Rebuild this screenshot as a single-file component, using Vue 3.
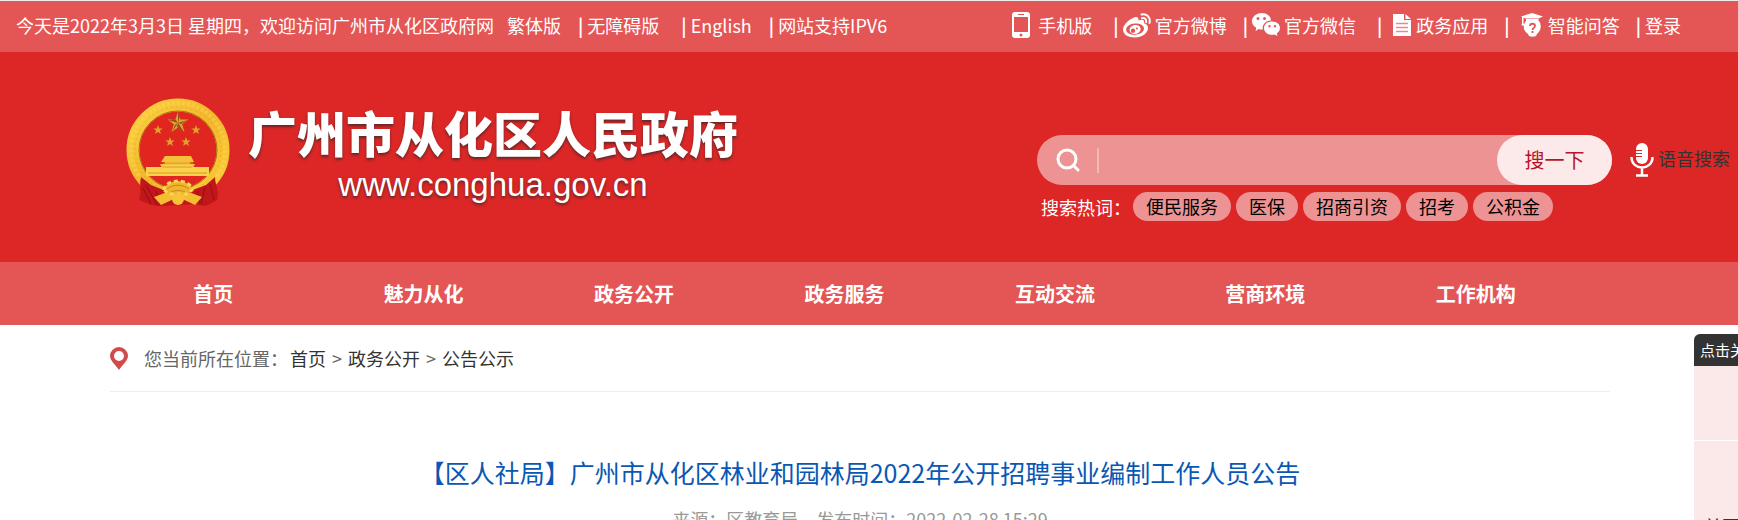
<template>
  <div class="page">
    <div class="topbar">
      <ul class="top-list top-left">
        <li class="today">今天是2022年3月3日 星期四，欢迎访问广州市从化区政府网</li>
        <li><a href="#">繁体版</a></li>
        <li><span class="sep">|</span><a href="#">无障碍版</a></li>
        <li class="wide"><span class="sep">|</span><a href="#">English</a></li>
        <li><span class="sep">|</span><a href="#">网站支持IPV6</a></li>
      </ul>
      <ul class="top-list">
        <li>
          <a href="#" class="phone">
            <svg width="18" height="26" viewBox="0 0 18 26">
              <path fill="#fff" fill-rule="evenodd" d="M3 0h12a3 3 0 0 1 3 3v20a3 3 0 0 1-3 3H3a3 3 0 0 1-3-3V3a3 3 0 0 1 3-3zM2 5v15h14V5zM6 2v1h6V2zM9 21.500a1.500 1.500 0 1 0 0 3 1.500 1.500 0 0 0 0-3z" />
            </svg>
            手机版
          </a>
        </li>
        <li class="wide">
          <span class="sep">|</span>
          <a href="#">
            <svg width="28" height="25" viewBox="0 0 28 25">
              <path fill="#fff" fill-rule="evenodd" d="M10 5c2.500-1.500 6-1.500 5.500 2.500 3-1.300 6.500-1 5.500 2.700 2.500.6 4 2.300 4 4.800 0 5-6 9.500-13 9.500S0 21.500 0 16.500C0 12.500 5 7 10 5zM12 10.500c-5 .2-9 3-8.800 6.500.3 3 4.300 5 9 4.700 5-.3 9-3 8.800-6.500-.3-3-4.300-5-9-4.700z" />
              <path fill="#fff" fill-rule="evenodd" d="M12 12c3.600-.3 6 2 5.600 4.700-.5 2.600-3 4.300-6 4.300s-5.200-2-5-4.500C6.900 14 9 12.200 12 12zM10 15.500a2.200 2.200 0 1 0 0 4.400 2.200 2.200 0 0 0 0-4.400zM14 14.500a1 1 0 1 0 0 2 1 1 0 0 0 0-2z" />
              <path fill="none" stroke="#fff" stroke-width="2" stroke-linecap="round" d="M18.500 1.500c5-1.500 9.500 3 8 8.500M19 5.200c2.700-.8 4.800 1.300 4 4" />
            </svg>
            官方微博
          </a>
        </li>
        <li>
          <span class="sep">|</span>
          <a href="#">
            <svg width="28" height="24" viewBox="0 0 28 24">
              <path fill="#fff" fill-rule="evenodd" d="M9.500 0C15 0 19 3.300 19 7.500c-4.500 0-8.300 3.200-8.300 7.500l.2 1.500c-1.500.2-2.800 0-4.200-.5L3.500 18l.8-3.200C1.700 13.200 0 10.900 0 8.200 0 3.700 4.200 0 9.500 0zM6 4a1.500 1.500 0 1 0 0 3 1.500 1.500 0 0 0 0-3zM12.500 4a1.500 1.500 0 1 0 0 3 1.500 1.500 0 0 0 0-3z" />
              <path fill="#fff" fill-rule="evenodd" d="M20 8.500c4.500 0 8 2.800 8 6.500 0 2.300-1.300 4.100-3.200 5.400l.7 2.700-3-1.600c-6 1.300-10.500-2-10.500-6.500 0-3.700 3.500-6.500 8-6.500zM17.500 12a1.200 1.200 0 1 0 0 2.400 1.200 1.200 0 0 0 0-2.400zM23 12a1.200 1.200 0 1 0 0 2.400 1.200 1.200 0 0 0 0-2.400z" />
            </svg>
            官方微信
          </a>
        </li>
        <li class="wide">
          <span class="sep">|</span>
          <a href="#" class="spaced">
            <svg width="18" height="22" viewBox="0 0 18 22">
              <path fill="#fff" d="M0 0h11v6h7v16H0zM12.500 0 18 5h-5.500z" />
              <path stroke="#e88" stroke-width="1.500" d="M3 9.500h12M3 13.500h12M3 17.500h12" />
            </svg>
            政务应用
          </a>
        </li>
        <li>
          <span class="sep">|</span>
          <a href="#" class="spaced">
            <svg width="22" height="24" viewBox="0 0 22 24">
              <path fill="#fff" d="M11 0 22 3.500 17.500 5.500H4.500L0 3.500zM5 6h12.500v3H5z" />
              <path fill="#fff" d="M1 4h1.500v6l.8 2.500H.5L1 10z" />
              <path fill="#fff" d="M5 8h13c3 4 2 10-2 13l-1 2c-2 1-5 1-7 0l-1-2C2 18 1.500 12 5 8z" />
              <path fill="none" stroke="#e45656" stroke-width="1.800" d="M9 13c0-3 5-3 5 0 0 2-2.500 1.800-2.500 4M11.500 18v2" />
            </svg>
            智能问答
          </a>
        </li>
        <li><span class="sep">|</span><a href="#">登录</a></li>
      </ul>
    </div>

    <header class="header">
      <a href="#" class="logo">
        <svg class="emblem" width="104" height="110" viewBox="0 0 104 110">
          <defs>
            <linearGradient id="gold" x1="0" y1="0" x2="1" y2="1">
              <stop offset="0" stop-color="#fbd23f" />
              <stop offset="0.5" stop-color="#f3b62b" />
              <stop offset="1" stop-color="#fccf38" />
            </linearGradient>
          </defs>
          <circle cx="52" cy="52" r="45" fill="#e12620" stroke="url(#gold)" stroke-width="13" />
          <circle cx="52" cy="52" r="47" fill="none" stroke="#fbdc62" stroke-width="4" stroke-dasharray="3 2" opacity="0.4" />
          <circle cx="52" cy="52" r="43" fill="none" stroke="#d99a25" stroke-width="1" stroke-dasharray="2 3" opacity="0.5" />
          <circle cx="52" cy="52" r="39" fill="none" stroke="#a8701c" stroke-width="1" />
          <!-- 五角星 -->
          <g fill="#dca52d">
            <path v-for="star in stars" :key="star.x" :d="starPath(star)" />
          </g>
          <path fill="#8c541c" d="m52 14 0 11 2-7zM52 25l10-3-7 4zM52 25l6 9-7-5zM52 25l-6 9 3-7zM52 25l-10-3 7-1z" />
          <!-- 天安门 -->
          <path fill="#f5c13a" d="M39 58h26l3 6h-4v2h5l-2 4H36l-2-4h5v-2h-4z" />
          <path fill="#fbd24c" d="M20 69h63v9H20zM37 67h29v11H37z" />
          <path stroke="#d99a25" d="M37 65h30M37 69h29M22 75h59" />
          <!-- 绶带和齿轮 -->
          <path fill="#c1171a" d="m15 79 10 8 15 6h24l16-6 9-8c0 8 5 15 2 23-4 2-8 6-14 6l-8-2-34 2c-7 1-14-3-22-6 3-8 0-15 2-23z" />
          <path stroke="#8e1115" stroke-width="1" fill="none" d="m17 90 8 16m-5-19 11 20m48-18-4 17m9-20 4 16M30 93l4 14m37-14 3 13" />
          <path fill="#f5bd30" d="m28 99 24-9 24 9-7 8-17-8-17 8z" />
          <path fill="#efb52b" stroke="#fbd65c" stroke-width="3" stroke-dasharray="4 3" d="M38 92a14 9 0 0 1 28 0l-5 4H43z" />
          <circle cx="52" cy="101" r="6" fill="#f7c339" />
          <path stroke="#c9861f" fill="none" d="M41 91c7-5 15-5 22 0M45 94c4-2 10-2 14 0" />
        </svg>
        <span class="logo-text">
          <strong class="site-name">广州市从化区人民政府</strong>
          <span class="site-url">www.conghua.gov.cn</span>
        </span>
      </a>

      <div class="search">
        <div class="search-row">
          <form class="search-form" @submit.prevent>
            <label for="keyword" class="search-label" aria-label="搜索">
              <svg width="24" height="24" viewBox="0 0 24 24" fill="none" stroke="#fff" stroke-width="3" stroke-linecap="round">
                <circle cx="11" cy="11" r="9" />
                <path d="m18 18 4 4" />
              </svg>
            </label>
            <input id="keyword" v-model="keyword" type="text" class="search-input">
            <button type="submit" class="search-btn">搜一下</button>
          </form>
          <a href="#" class="voice">
            <svg width="24" height="34" viewBox="0 0 24 34">
              <rect x="6" y="0" width="12" height="21" rx="6" fill="#fff" />
              <path stroke="#dd2726" d="M5 7.500h7M5 10.500h7M5 13.500h7" />
              <path fill="none" stroke="#fff" stroke-width="2.500" d="M1.500 14c0 14 21 14 21 0M12 24v8M6 32.500h12" />
            </svg>
            <span>语音搜索</span>
          </a>
        </div>
        <div class="hot">
          <span class="hot-label">搜索热词：</span>
          <a v-for="word in hotWords" :key="word" href="#" class="hot-word">{{ word }}</a>
        </div>
      </div>
    </header>

    <nav class="nav">
      <ul class="nav-list">
        <li v-for="item in navItems" :key="item"><a href="#">{{ item }}</a></li>
      </ul>
    </nav>

    <main class="main">
      <div class="crumbs">
        <svg class="pin" width="18" height="23" viewBox="0 0 18 23">
          <path fill="#d14b4d" fill-rule="evenodd" d="M9 0a9 9 0 0 1 9 9c0 5-6 9-9 14C6 18 0 14 0 9a9 9 0 0 1 9-9zM9 4a5 5 0 1 0 0 10A5 5 0 0 0 9 4z" />
        </svg>
        <span class="crumbs-label">您当前所在位置：</span>
        <a href="#">首页</a>
        <span>&gt;</span>
        <a href="#">政务公开</a>
        <span>&gt;</span>
        <a href="#">公告公示</a>
      </div>
      <h1 class="title">【区人社局】广州市从化区林业和园林局2022年公开招聘事业编制工作人员公告</h1>
      <p class="meta">来源：区教育局　发布时间：2022-02-28 15:29</p>
    </main>

    <aside class="float">
      <button type="button" class="float-close">点击关闭</button>
      <div class="float-block"></div>
      <div class="float-block">
        <a href="#">首页</a>
      </div>
    </aside>
  </div>
</template>

<script setup>
import { ref } from 'vue'

const keyword = ref('')
const hotWords = ['便民服务', '医保', '招商引资', '招考', '公积金']
const navItems = ['首页', '魅力从化', '政务公开', '政务服务', '互动交流', '营商环境', '工作机构']

const stars = [
  { x: 52, y: 25, r: 11 },
  { x: 32, y: 32, r: 5 },
  { x: 70, y: 32, r: 5 },
  { x: 44, y: 44, r: 5 },
  { x: 60, y: 44, r: 5 }
]

const starPath = ({ x, y, r }) => {
  const points = []
  for (let i = 0; i < 10; i++) {
    const radius = i % 2 ? r * 0.4 : r
    const angle = (i * Math.PI) / 5
    points.push(`${x + radius * Math.sin(angle)} ${y - radius * Math.cos(angle)}`)
  }
  return `M${points.join('L')}z`
}
</script>

<style>
body {
  background: #fff;
  overflow: hidden;
}
</style>

<style scoped>
.page {
  position: relative;
  border-top: 1px solid #eee;
  font-family: "Noto Sans CJK SC", sans-serif;
  font-size: 18px;
  line-height: 26px;
  color: #333;
  white-space: nowrap;
  overflow: hidden;
}

ul {
  list-style: none;
  margin: 0;
  padding: 0;
}

a {
  color: inherit;
  text-decoration: none;
}

svg {
  display: block;
  flex-shrink: 0;
}

/* 顶部 */
.topbar {
  display: flex;
  justify-content: space-between;
  height: 51px;
  box-sizing: border-box;
  padding: 0 57px 3px 16px;
  background: #e45656;
  color: #fff;
}

.top-list {
  display: flex;
  align-items: center;
  gap: 16px;
}

.top-left {
  gap: 17px;
}

.top-list li,
.top-list a {
  display: flex;
  align-items: center;
  gap: 4px;
}

.top-list .today {
  margin-right: -4px;
}

.top-list .wide {
  margin-left: 5px;
}

.top-list .phone {
  gap: 8px;
}

.top-list .spaced {
  gap: 5px;
  margin-left: 7px;
}

.sep {
  font-weight: bold;
}

/* 头部 */
.header {
  display: flex;
  justify-content: space-between;
  align-items: flex-start;
  height: 210px;
  padding: 0 8px 0 126px;
  box-sizing: border-box;
  background: #dd2726;
  color: #fff;
}

.logo {
  display: flex;
  gap: 18px;
  padding-top: 46px;
}

.logo-text {
  display: flex;
  flex-direction: column;
  align-items: center;
  padding-top: 4px;
  text-shadow: 0 2px 3px rgba(60, 40, 40, 0.8);
}

.site-name {
  font-size: 49px;
  line-height: 60px;
  font-weight: 900;
}

.site-url {
  font-family: "Liberation Sans", sans-serif;
  font-size: 33px;
  line-height: 46px;
}

.search {
  padding-top: 83px;
}

.search-row {
  display: flex;
  align-items: center;
  gap: 18px;
}

.search-form {
  display: flex;
  width: 575px;
  height: 50px;
  border-radius: 25px;
  background: #ed9393;
}

.search-label {
  display: flex;
  align-items: center;
  padding: 0 17px 0 19px;
}

.search-input {
  flex: 1;
  min-width: 0;
  height: 25px;
  align-self: center;
  padding: 0 12px;
  border: 0;
  border-left: 2px solid #efb9b6;
  background: transparent;
  font: inherit;
  outline: none;
}

.search-btn {
  width: 115px;
  padding: 0 0 2px;
  border: 0;
  border-radius: 25px;
  background: #fce9e9;
  color: #b5142c;
  font-family: inherit;
  font-size: 20px;
}

.voice {
  display: flex;
  align-items: center;
  gap: 4px;
  color: #333;
}

.voice span {
  padding-bottom: 4px;
}

.hot {
  display: flex;
  align-items: center;
  gap: 5px;
  padding: 7px 0 0 4px;
}

.hot-label {
  margin-right: -3px;
}

.hot-word {
  padding: 0 13px;
  border-radius: 15px;
  background: #ed9393;
  color: #000;
  line-height: 29px;
}

/* 导航 */
.nav {
  padding: 0 157px 0 108px;
  background: #e45656;
  color: #fff;
}

.nav-list {
  display: grid;
  grid-template-columns: repeat(7, 1fr);
  text-align: center;
  font-size: 20px;
  font-weight: bold;
  line-height: 63px;
}

/* 正文 */
.main {
  max-width: 1500px;
  margin: 0 128px 0 110px;
}

.crumbs {
  display: flex;
  align-items: center;
  gap: 6px;
  height: 66px;
  border-bottom: 1px solid #eee;
}

.crumbs span {
  color: #666;
}

.pin {
  margin-right: 10px;
}

.crumbs-label {
  margin-right: -4px;
}

.title {
  margin: 0;
  padding: 60px 0 14px;
  font-size: 25px;
  line-height: 40px;
  font-weight: normal;
  text-align: center;
  color: #0a57b4;
}

.meta {
  margin: 0;
  text-align: center;
  color: #999;
}

/* 右侧浮动栏 */
.float {
  position: absolute;
  top: 333px;
  right: -56px;
  width: 100px;
}

.float-close {
  display: block;
  width: 100%;
  height: 32px;
  padding: 0 6px 2px;
  border: 0;
  border-radius: 6px 6px 0 0;
  background: #333;
  color: #fff;
  font-family: inherit;
  font-size: 15px;
  text-align: left;
}

.float-block {
  display: flex;
  align-items: flex-end;
  height: 74px;
  padding-left: 10px;
  border-bottom: 1px solid #fff;
  background: #fbe9e9;
}

.float-block:last-child {
  height: 98px;
}
</style>
